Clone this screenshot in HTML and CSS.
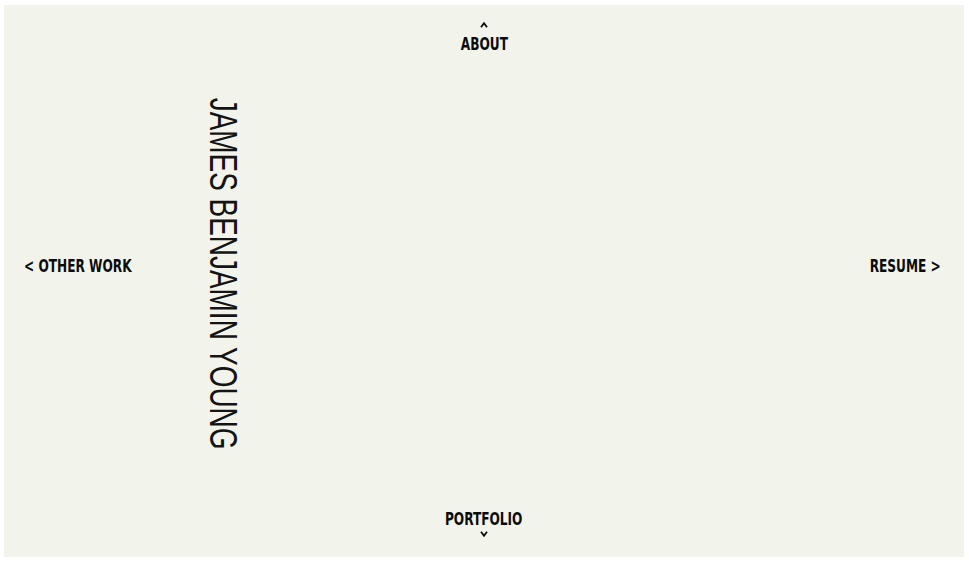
FILE: index.html
```html
<!DOCTYPE html>
<html lang="en">
<head>
<meta charset="utf-8">
<title>James Benjamin Young</title>
<link rel="stylesheet" href="styles.css">
</head>
<body>
<div class="frame">
  <nav class="top">
    <a class="nav-link stacked" href="#about">
      <svg class="chevron up" width="8" height="6" viewBox="0 0 8 6" aria-hidden="true"><path d="M1 5.2 L4 1.2 L7 5.2" fill="none" stroke="#0b0b0b" stroke-width="1.8"/></svg>
      <span class="label center">ABOUT</span>
    </a>
  </nav>
  <main class="middle">
    <a class="nav-link side-left" href="#other"><span class="label left">&lt; OTHER WORK</span></a>
    <div class="name-wrap"><h1 class="name">JAMES BENJAMIN YOUNG</h1></div>
    <span class="spacer"></span>
    <a class="nav-link side-right" href="#resume"><span class="label right">RESUME &gt;</span></a>
  </main>
  <nav class="bottom">
    <a class="nav-link stacked" href="#portfolio">
      <span class="label center">PORTFOLIO</span>
      <svg class="chevron down" width="8" height="6" viewBox="0 0 8 6" aria-hidden="true"><path d="M1 0.8 L4 4.8 L7 0.8" fill="none" stroke="#0b0b0b" stroke-width="1.8"/></svg>
    </a>
  </nav>
</div>
</body>
</html>
```

FILE: styles.css
```css
html, body {
  margin: 0;
  padding: 0;
  background: #ffffff;
}

.frame {
  margin: 5px 5px 5px 4px;
  height: 552px;
  background: #f2f4ec;
  display: grid;
  grid-template-rows: auto 1fr auto;
  overflow: hidden;
}

.nav-link {
  font-family: "DejaVu Sans Condensed", "DejaVu Sans", sans-serif;
  font-weight: bold;
  font-size: 18px;
  color: #0b0b0b;
  text-decoration: none;
  line-height: 18px;
  white-space: nowrap;
}

.label {
  display: inline-block;
  transform: scaleX(0.75);
}

.label.left { transform-origin: left center; }
.label.right { transform-origin: right center; }
.label.center { transform-origin: center center; }

.top, .bottom {
  display: flex;
  justify-content: center;
}

.top {
  padding-top: 17px;
}

.bottom {
  padding-bottom: 20px;
}

.stacked {
  display: flex;
  flex-direction: column;
  align-items: center;
}

.chevron {
  display: block;
}

.chevron.up {
  margin-bottom: 7px;
}

.chevron.down {
  margin-top: 3px;
}

.middle {
  display: grid;
  grid-template-columns: 180px auto 1fr auto;
  align-items: center;
  padding: 0 23px 0 20px;
}

.side-left, .side-right {
  margin-bottom: 31px;
}

.side-right {
  text-align: right;
}

.name-wrap {
  height: 352px;
  display: flex;
  flex-direction: column;
  justify-content: center;
  align-items: center;
  margin-bottom: 15px;
}

.name {
  margin: 0;
  writing-mode: vertical-rl;
  font-family: "Liberation Sans", Arial, sans-serif;
  font-weight: normal;
  font-size: 39px;
  line-height: 1;
  color: #141414;
  transform: scaleY(0.716);
  white-space: nowrap;
}
```
